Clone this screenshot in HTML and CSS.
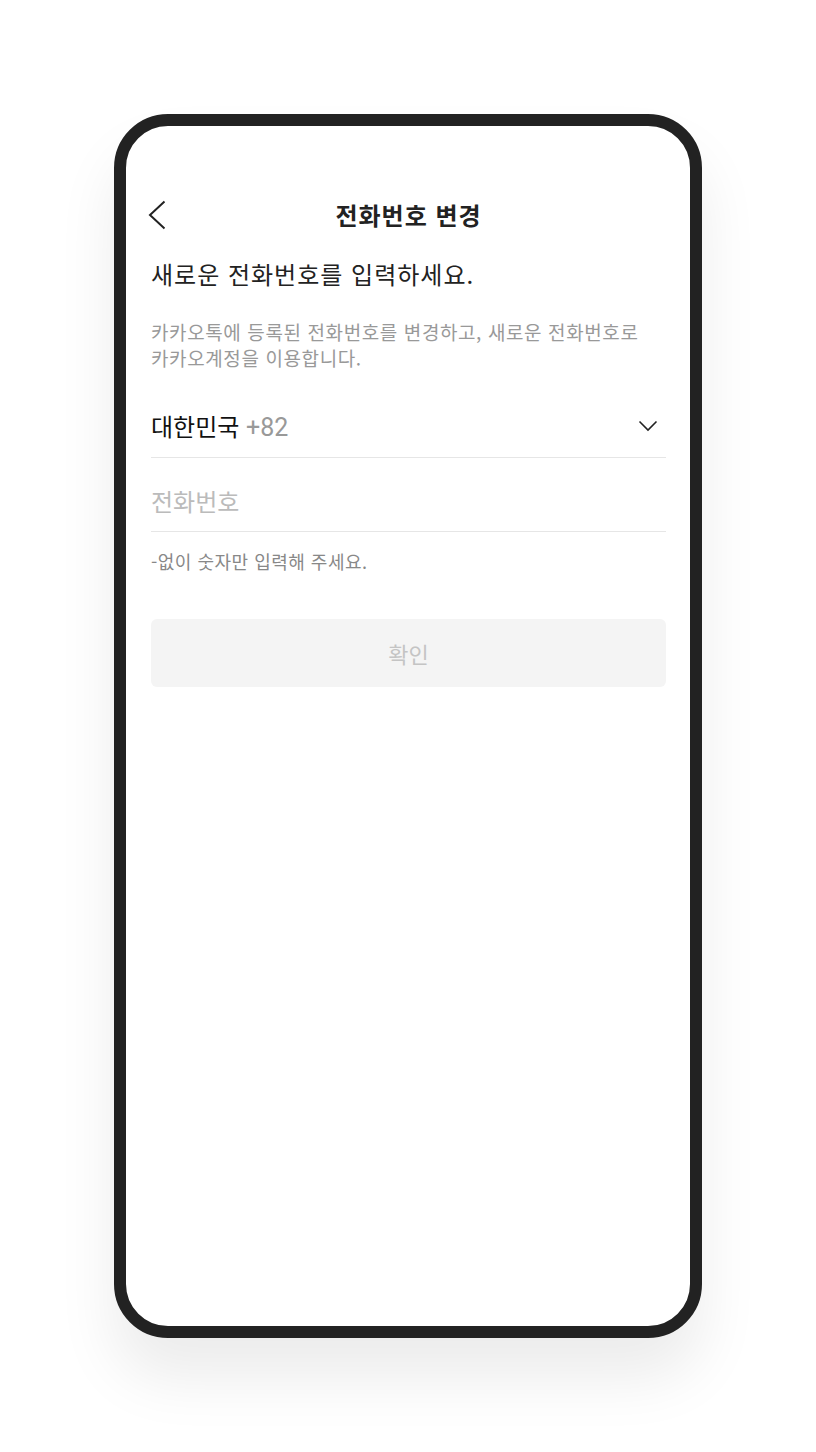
FILE: index.html
```html
<!DOCTYPE html>
<html lang="ko">
<head>
<meta charset="utf-8">
<title>전화번호 변경</title>
<link rel="stylesheet" href="styles.css">
</head>
<body>
<div class="stage">
  <div class="phone">
    <div class="screen">
      <div class="header">
        <button class="back" aria-label="뒤로">
          <svg width="18" height="30" viewBox="0 0 18 30"><path d="M16.5 1.5 L2 15 L16.5 28.5" fill="none" stroke="#222" stroke-width="2"/></svg>
        </button>
        <h1 class="title">전화번호 변경</h1>
      </div>
      <h2 class="heading">새로운 전화번호를 입력하세요.</h2>
      <p class="desc">카카오톡에 등록된 전화번호를 변경하고, 새로운 전화번호로<br>카카오계정을 이용합니다.</p>
      <div class="field country">
        <span class="country-label"><span class="country-name">대한민국</span> <span class="code">+82</span></span>
        <svg class="chev" width="20" height="12" viewBox="0 0 20 12"><path d="M1.5 1.5 L10 10 L18.5 1.5" fill="none" stroke="#222" stroke-width="1.6"/></svg>
      </div>
      <div class="field phone-input">
        <span class="placeholder">전화번호</span>
      </div>
      <p class="hint">-없이 숫자만 입력해 주세요.</p>
      <button class="confirm">확인</button>
    </div>
  </div>
</div>
</body>
</html>
```
FILE: styles.css
```css
* { box-sizing: border-box; }
html, body { margin: 0; padding: 0; background: #fff; }
body {
  font-family: "Noto Sans CJK KR", "Noto Sans", sans-serif;
  color: #222;
}
.stage {
  display: flex;
  justify-content: center;
  padding-top: 114px;
  height: 1452px;
}
.phone {
  width: 588px;
  height: 1224px;
  border: 12px solid #222;
  border-radius: 54px;
  background: #fff;
  box-shadow: 0 40px 60px rgba(0,0,0,0.08);
  overflow: hidden;
}
.screen {
  padding: 64px 24px 0 25px;
  display: flex;
  flex-direction: column;
}
.header {
  height: 50px;
  display: flex;
  align-items: center;
  justify-content: center;
  position: relative;
}
.back {
  position: absolute;
  left: -3px;
  top: 10px;
  background: none;
  border: 0;
  padding: 0;
  width: 18px;
  height: 30px;
}
.back svg { display: block; }
.title {
  margin: 0;
  font-size: 24px;
  font-weight: 700;
  line-height: 30px;
  letter-spacing: 1px;
  color: #222;
}
.heading {
  margin: 17px 0 0;
  font-size: 24px;
  font-weight: 400;
  line-height: 34px;
  letter-spacing: 1px;
  color: #222;
}
.desc {
  margin: 28px 0 0;
  font-size: 19px;
  line-height: 26px;
  letter-spacing: 0.6px;
  color: #999;
}
.field {
  display: flex;
  align-items: center;
  border-bottom: 1px solid #e6e6e6;
  font-size: 24px;
  line-height: 30px;
}
.country {
  margin-top: 26px;
  padding: 14px 0 16px;
}
.country-label { height: 30px; }
.country-name { color: #111; }
.code {
  color: #999;
  font-family: Roboto, "Noto Sans CJK KR", sans-serif;
  font-size: 25px;
}
.chev { margin-left: auto; margin-right: 8px; }
.phone-input { padding: 28px 0 15px; }
.placeholder { color: #bbb; }
.hint {
  margin: 18px 0 0;
  font-size: 18px;
  line-height: 22px;
  letter-spacing: 0.5px;
  color: #888;
}
.confirm {
  margin-top: 47px;
  height: 68px;
  width: 100%;
  border: 0;
  border-radius: 6px;
  background: #f4f4f4;
  color: #c4c4c4;
  font-family: inherit;
  font-size: 22px;
}
```
